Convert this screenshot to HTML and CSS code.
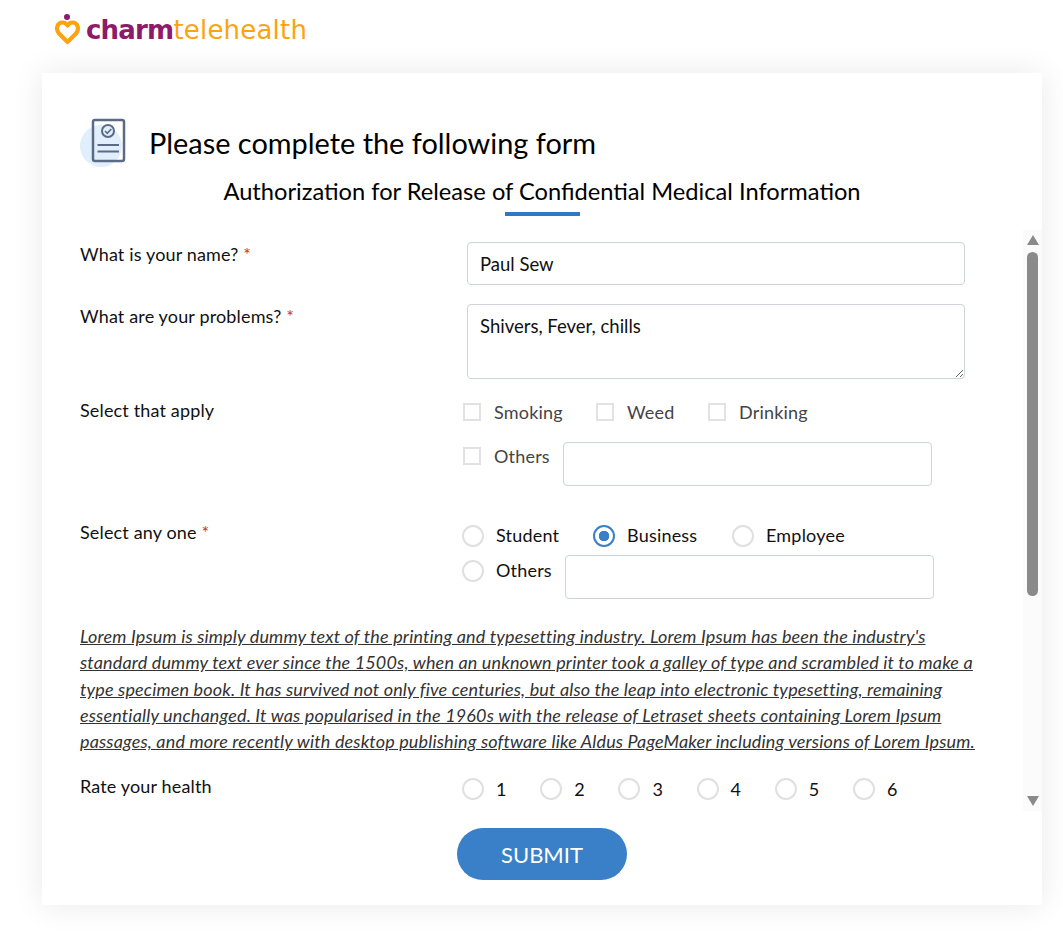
FILE: index.html
```html
<!DOCTYPE html>
<html lang="en">
<head>
<meta charset="utf-8">
<title>Charm Telehealth form</title>
<link rel="stylesheet" href="styles.css">
</head>
<body>
<header class="topbar">
  <svg class="logo-mark" width="25" height="32" viewBox="0 0 25 32" aria-hidden="true">
    <circle cx="12" cy="3" r="3" fill="#8e1a6b"/>
    <path d="M12.500 28 L4 19.500 C0.500 15.500 2 8.500 7.500 8.500 C10 8.500 11.500 9.800 12.500 11.500 C13.500 9.800 15 8.500 17.500 8.500 C23 8.500 24.500 15.500 21 19.500 Z" fill="none" stroke="#fca311" stroke-width="4.200" stroke-linejoin="round"/>
  </svg>
  <div class="logo-text"><span class="logo-charm">charm</span><span class="logo-tele">telehealth</span></div>
</header>
<main class="card">
  <div class="card-head">
    <svg class="form-icon" width="49" height="50" viewBox="0 0 49 50" aria-hidden="true">
      <circle cx="21" cy="28" r="21" fill="#e1eefd"/>
      <rect x="13" y="2" width="31" height="41" rx="2" fill="none" stroke="#5b6b85" stroke-width="2.500"/>
      <circle cx="28" cy="13" r="6" fill="none" stroke="#5b6b85" stroke-width="2"/>
      <path d="M25 13 L27.300 15.300 L31.300 11" fill="none" stroke="#5b6b85" stroke-width="1.600"/>
      <path d="M17.500 27 H39 M17.500 33.500 H39" stroke="#5b6b85" stroke-width="2"/>
    </svg>
    <h1 class="title">Please complete the following form</h1>
  </div>
  <h2 class="subtitle">Authorization for Release of Confidential Medical Information</h2>
  <div class="rule"></div>
  <div class="scroller">
    <form class="form">
      <div class="row row-name">
        <label class="label">What is your name? <span class="req">*</span></label>
        <input class="text-input" type="text" value="Paul Sew">
      </div>
      <div class="row row-problems">
        <label class="label">What are your problems? <span class="req">*</span></label>
        <textarea class="text-area">Shivers, Fever, chills</textarea>
      </div>
      <div class="row row-apply">
        <div class="label">Select that apply</div>
        <div class="options">
          <div class="check-line">
            <label class="check check-smoking"><span class="box"></span>Smoking</label>
            <label class="check check-weed"><span class="box"></span>Weed</label>
            <label class="check"><span class="box"></span>Drinking</label>
          </div>
          <div class="check-others">
            <label class="check"><span class="box"></span>Others</label>
            <input class="other-input" type="text">
          </div>
        </div>
      </div>
      <div class="row row-any">
        <div class="label">Select any one <span class="req">*</span></div>
        <div class="options">
          <div class="radio-line">
            <label class="radio radio-student"><span class="dot"></span>Student</label>
            <label class="radio radio-business"><span class="dot dot-on"></span>Business</label>
            <label class="radio"><span class="dot"></span>Employee</label>
          </div>
          <div class="radio-others">
            <label class="radio"><span class="dot"></span>Others</label>
            <input class="other-input" type="text">
          </div>
        </div>
      </div>
      <p class="lorem">Lorem Ipsum is simply dummy text of the printing and typesetting industry. Lorem Ipsum has been the industry's standard dummy text ever since the 1500s, when an unknown printer took a galley of type and scrambled it to make a type specimen book. It has survived not only five centuries, but also the leap into electronic typesetting, remaining essentially unchanged. It was popularised in the 1960s with the release of Letraset sheets containing Lorem Ipsum passages, and more recently with desktop publishing software like Aldus PageMaker including versions of Lorem Ipsum.</p>
      <div class="row row-rate">
        <div class="label">Rate your health</div>
        <div class="rate-line">
          <label class="radio rate"><span class="dot"></span>1</label>
          <label class="radio rate"><span class="dot"></span>2</label>
          <label class="radio rate"><span class="dot"></span>3</label>
          <label class="radio rate"><span class="dot"></span>4</label>
          <label class="radio rate"><span class="dot"></span>5</label>
          <label class="radio rate"><span class="dot"></span>6</label>
        </div>
      </div>
    </form>
    <div class="scrollbar" aria-hidden="true">
      <span class="arrow-up"></span>
      <span class="thumb"></span>
      <span class="arrow-down"></span>
    </div>
  </div>
  <div class="actions"><button class="submit" type="button">SUBMIT</button></div>
</main>
</body>
</html>
```
FILE: styles.css
```css
* { box-sizing: border-box; }
html, body { margin: 0; padding: 0; }
body {
  width: 1063px;
  height: 932px;
  overflow: hidden;
  background: #fff;
  font-family: Lato, "Liberation Sans", sans-serif;
  color: #111;
}
.topbar {
  height: 73px;
  padding: 14px 0 0 55px;
  display: flex;
  align-items: flex-start;
}
.logo-mark { display: block; flex: none; }
.logo-text {
  margin: 0 0 0 6px;
  font-family: "DejaVu Sans", sans-serif;
  font-size: 26px;
  line-height: 32px;
}
.logo-charm { color: #8e1a6b; font-weight: 700; letter-spacing: -0.8px; }
.logo-tele { color: #fca311; font-weight: 400; letter-spacing: 0.2px; }
.card {
  margin-left: 42px;
  width: 1000px;
  height: 832px;
  background: #fff;
  box-shadow: 0 0 30px rgba(0, 0, 0, 0.09);
  padding-top: 45px;
  display: flex;
  flex-direction: column;
}
.card-head {
  display: flex;
  align-items: center;
  padding-left: 38px;
  height: 50px;
}
.form-icon { display: block; flex: none; }
.title {
  margin: -1px 0 0 20px;
  font-size: 28.900px;
  font-weight: 400;
  color: #000;
  line-height: 36px;
}
.subtitle {
  margin: 7px 0 0;
  text-align: center;
  font-size: 23.670px;
  font-weight: 400;
  color: #000;
  line-height: 32px;
}
.rule {
  width: 75px;
  height: 4px;
  margin: 5px auto 0;
  background: #2f78c4;
}
.scroller {
  display: flex;
  height: 581px;
  margin-top: 14px;
}
.form {
  flex: none;
  width: 981px;
  padding: 12px 0 0 38px;
  font-size: 18px;
}
.row { display: grid; grid-template-columns: 387px 1fr; }
.label { font-size: 18px; letter-spacing: 0.15px; line-height: 24px; color: #111; font-weight: 400; }
.req { color: #c0392b; }
.row-name { height: 62px; }
.row-problems { height: 94px; }
.row-apply { height: 122px; }
.row-any { height: 103px; }
.text-input, .text-area, .other-input {
  display: block;
  border: 1px solid #ced4da;
  border-radius: 4px;
  background: #fff;
  font-family: inherit;
  font-size: 18.500px;
  color: #111;
  padding: 0 12px;
  margin: 0;
  outline: none;
}
.text-input { width: 498px; height: 43px; }
.text-area { width: 498px; height: 75px; padding-top: 8px; line-height: 26px; resize: vertical; }
.options { margin-left: -4px; }
.check-line { display: flex; height: 26px; margin-top: 1px; }
.check {
  display: flex;
  align-items: center;
  font-size: 18px;
  letter-spacing: 0.2px;
  line-height: 26px;
  color: #444;
}
.box {
  width: 18px;
  height: 18px;
  border: 2px solid #e2e2e2;
  margin-right: 13px;
  flex: none;
  background: #fff;
}
.check-smoking { width: 133px; }
.check-weed { width: 112px; }
.check-others { display: flex; align-items: flex-start; margin-top: 17px; }
.check-others .check { margin-right: 13px; height: 28px; }
.other-input { width: 369px; height: 44px; }
.radio-line { display: flex; height: 26px; margin-top: 2px; margin-left: -1px; }
.radio {
  display: flex;
  align-items: center;
  font-size: 18px;
  letter-spacing: 0.2px;
  line-height: 26px;
  color: #111;
}
.dot {
  width: 22px;
  height: 22px;
  border: 2px solid #e0e0e0;
  border-radius: 50%;
  margin: 2px 12px 0 0;
  flex: none;
  background: #fff;
}
.dot-on {
  border-color: #3a80c9;
  background: radial-gradient(circle, #3a80c9 0 5px, #fff 5.500px);
}
.radio-student { width: 131px; }
.radio-business { width: 139px; }
.radio-others { display: flex; align-items: flex-start; margin: 7px 0 0 -1px; }
.radio-others .radio { margin: 2px 13px 0 0; height: 26px; }
.lorem {
  margin: 0;
  width: 900px;
  font-size: 18px;
  letter-spacing: 0.15px;
  line-height: 26.250px;
  font-style: italic;
  text-decoration: underline;
  color: #333;
}
.row-rate { margin-top: 20px; }
.rate-line { display: flex; margin: 2px 0 0 -5px; }
.rate { width: 78.200px; }
.rate .dot { margin-top: 0; }
.scrollbar {
  width: 19px;
  background: #fbfbfb;
  display: flex;
  flex-direction: column;
  align-items: center;
  padding-top: 5px;
}
.arrow-up {
  width: 0;
  height: 0;
  border-left: 6.500px solid transparent;
  border-right: 6.500px solid transparent;
  border-bottom: 10px solid #8a8a8a;
}
.thumb {
  width: 11px;
  height: 344px;
  margin-top: 7px;
  border-radius: 6px;
  background: #8a8a8a;
}
.arrow-down {
  width: 0;
  height: 0;
  margin-top: 200px;
  border-left: 6.500px solid transparent;
  border-right: 6.500px solid transparent;
  border-top: 10px solid #8a8a8a;
}
.actions { display: flex; justify-content: center; margin-top: 17px; }
.submit {
  width: 170px;
  height: 52px;
  border: 0;
  border-radius: 26px;
  background: #3a80c9;
  color: #fff;
  font-family: inherit;
  font-size: 22px;
  margin: 0;
  padding: 0;
}
```
